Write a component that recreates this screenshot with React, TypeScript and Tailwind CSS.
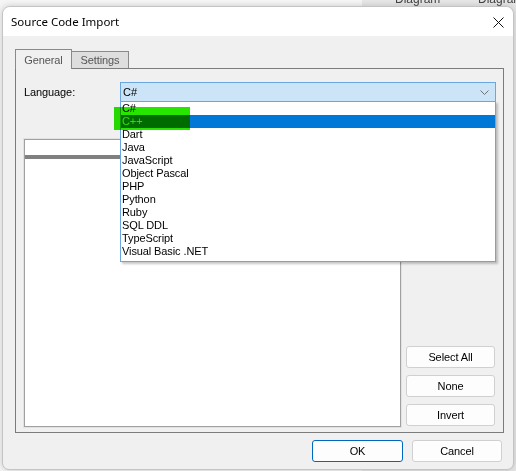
import { useState } from 'react';

const languages = [
  'C#',
  'C++',
  'Dart',
  'Java',
  'JavaScript',
  'Object Pascal',
  'PHP',
  'Python',
  'Ruby',
  'SQL DDL',
  'TypeScript',
  'Visual Basic .NET',
];

function Button({ label, primary = false, className = '' }: { label: string; primary?: boolean; className?: string }) {
  return (
    <button
      className={
        'flex items-center justify-center rounded-[3px] bg-[#fdfdfd] text-[11px] tracking-[-0.1px] text-black ' +
        (primary ? 'border border-[#0067c0] ' : 'border border-[#d0d0d0] ') +
        className
      }
    >
      {label}
    </button>
  );
}

export default function App() {
  const [selected] = useState(1);

  return (
    <div className="relative h-[471px] w-[516px] overflow-hidden bg-[#f5f5f5] font-['Liberation_Sans',Arial,sans-serif]">
      {/* host window peeking out behind the dialog */}
      <div className="absolute right-0 top-0 h-[471px] w-[154px] bg-[#e6e6e6]">
        <div className="absolute -top-[8px] left-[33px] text-[12px] leading-[14px] text-[#444]">Diagram</div>
        <div className="absolute -top-[8px] left-[116px] text-[12px] leading-[14px] text-[#444]">Diagram</div>
      </div>

      <div className="relative ml-[2px] mt-[6px] flex h-[464px] w-[512px] flex-col overflow-hidden rounded-t-[8px] rounded-b-[7px] border border-[#c4c4c4] bg-[#f0f0f0] shadow-[0_0_6px_rgba(0,0,0,0.18)]">
        {/* title bar */}
        <div className="flex h-[29px] shrink-0 items-center justify-between bg-white pl-[8px] pr-[9px]">
          <span className="font-['Noto_Sans',sans-serif] text-[11.5px] text-black">Source Code Import</span>
          <svg width="11" height="11" viewBox="0 0 11 11" className="mt-[1px]">
            <path d="M0.5 0.5 L10.5 10.5 M10.5 0.5 L0.5 10.5" stroke="#111" strokeWidth="1" />
          </svg>
        </div>

        <div className="flex flex-col pl-[12px]">
          {/* tab strip */}
          <div className="mt-[12px] flex h-[20px] items-end">
            <div className="relative z-10 -mb-px flex h-[20px] w-[57px] items-center justify-center border-x border-t border-[#8a8a8a] bg-[#f0f0f0] pt-[1px] text-[11px] tracking-[-0.1px] text-[#555]">
              General
            </div>
            <div className="flex h-[17px] w-[57px] items-center justify-center border-r border-t border-[#8a8a8a] bg-[#dedede] text-[11px] tracking-[-0.1px] text-[#555]">
              Settings
            </div>
          </div>

          {/* tab page */}
          <div className="flex h-[365px] w-[489px] flex-col border border-[#7c7c7c] pl-[7px] pr-[6px]">
            <div className="mt-[13px] flex items-center">
              <span className="w-[97px] pl-[1px] text-[11px] tracking-[-0.1px] text-black">Language:</span>
              <div className="relative">
                <div className="flex h-[20px] w-[376px] items-center justify-between border border-[#69a7e2] bg-[#cce4f7] pl-[2px] pr-[6px] text-[11px] text-black">
                  <span>{languages[0]}</span>
                  <svg width="9" height="5" viewBox="0 0 9 5">
                    <path d="M0.5 0.5 L4.5 4.5 L8.5 0.5" fill="none" stroke="#707070" strokeWidth="1" />
                  </svg>
                </div>

                {/* open drop-down list */}
                <div className="absolute left-0 top-[19px] z-20 w-[376px] border border-[#6aa7e0] bg-white pb-[3px] shadow-[2px_2px_2px_rgba(0,0,0,0.22)]">
                  {languages.map((lang, i) => (
                    <div
                      key={lang}
                      className={
                        'h-[13px] pl-[1px] text-[11px] leading-[13px] tracking-[-0.1px] ' +
                        (i === selected ? 'bg-[#0078d7] text-white' : 'text-black')
                      }
                    >
                      {lang}
                    </div>
                  ))}
                </div>

                {/* marker stroke over the C++ entry */}
                <div className="pointer-events-none absolute -left-[6px] top-[25px] z-30 h-[23px] w-[76px] bg-[#26e600] mix-blend-multiply" />
              </div>
            </div>

            <div className="mt-[36px] flex flex-1 pb-[4px]">
              {/* item list */}
              <div className="h-[290px] w-[379px] border border-[#e2e2e2]">
                <div className="h-full w-full border border-[#a0a0a0] bg-white">
                  <div className="h-[15px] bg-white" />
                  <div className="h-[4px] bg-[#808080]" />
                </div>
              </div>

              <div className="ml-[4px] flex flex-col justify-end gap-[7px] pb-[2px]">
                <Button label="Select All" className="h-[22px] w-[89px]" />
                <Button label="None" className="h-[22px] w-[89px]" />
                <Button label="Invert" className="h-[22px] w-[89px]" />
              </div>
            </div>
          </div>

          {/* dialog buttons */}
          <div className="mt-[7px] flex justify-end gap-[9px] pr-[11px]">
            <Button label="OK" primary className="h-[22px] w-[91px]" />
            <Button label="Cancel" className="h-[22px] w-[90px]" />
          </div>
        </div>
      </div>
    </div>
  );
}
